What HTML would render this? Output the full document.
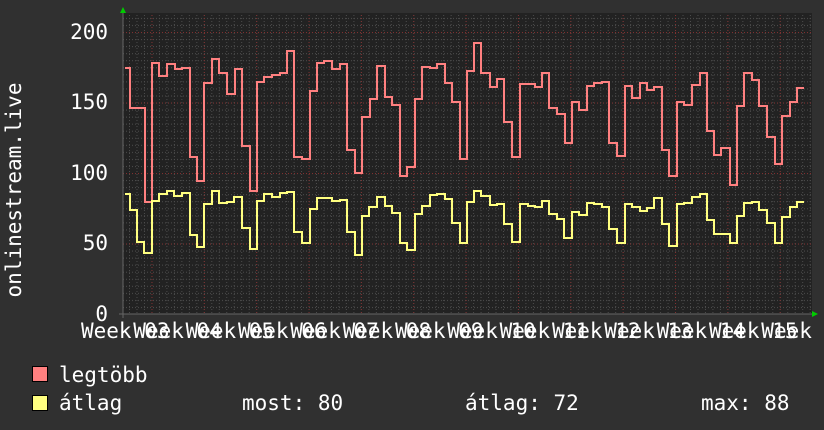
<!DOCTYPE html>
<html><head><meta charset="utf-8"><style>
html,body{margin:0;padding:0;background:#303030;}
svg{display:block}
text{font-family:"DejaVu Sans Mono","Liberation Mono",monospace;fill:#fff;}
</style></head><body>
<svg width="824" height="430" viewBox="0 0 824 430" xmlns="http://www.w3.org/2000/svg">
<defs>
<pattern id="ph" patternUnits="userSpaceOnUse" x="0" y="314" width="6" height="7.05"><path d="M0 0.5H1M3 0.5H4" stroke="#4c4c4c" stroke-width="1"/></pattern>
<pattern id="pv" patternUnits="userSpaceOnUse" x="129" y="0" width="7.48" height="3"><path d="M0.5 0V1" stroke="#4c4c4c" stroke-width="1"/></pattern>
<pattern id="rh" patternUnits="userSpaceOnUse" x="0" y="314" width="3" height="70.5"><path d="M0 0.5H1" stroke="#803030" stroke-width="1"/></pattern>
<pattern id="rv" patternUnits="userSpaceOnUse" x="151.5" y="0" width="52.35" height="3"><path d="M0.5 0V1" stroke="#803030" stroke-width="1"/></pattern>
</defs>
<rect width="824" height="430" fill="#303030"/>
<rect x="123" y="13" width="689" height="301" fill="#222"/>
<rect x="123" y="13" width="689" height="301" fill="url(#ph)"/>
<rect x="123" y="13" width="689" height="301" fill="url(#pv)"/>
<rect x="123" y="13" width="689" height="301" fill="url(#rh)"/>
<rect x="124" y="13" width="688" height="301" fill="url(#rv)"/>
<path d="M123 13V318M119 314H816" stroke="#666" stroke-width="1" fill="none"/>
<polygon points="120,13 126,13 123,7" fill="#0c0"/>
<polygon points="812,311 812,317 818,314" fill="#0c0"/>
<path fill="none" stroke="#ff8080" stroke-width="2" d="M125 68H130V108H145V202H152V63H159V76H167V64H175V69H182V68H190V157H197V181H204V83H212V59H219V73H227V94H235V69H242V146H250V191H257V82H264V77H272V75H280V73H287V51H294V157H302V159H310V91H317V63H324V61H332V69H340V64H347V150H355V173H362V117H370V99H377V66H385V97H392V105H400V176H407V167H415V99H422V67H430V68H437V64H445V83H452V102H460V159H467V71H474V43H481V73H490V87H497V79H504V122H512V157H520V84H535V87H542V73H549V108H557V114H565V143H572V102H579V110H587V86H594V83H602V82H609V143H617V156H625V86H632V98H640V83H647V90H654V87H662V150H669V176H677V102H684V105H692V85H700V73H707V131H714V155H721V148H730V185H737V106H744V73H752V80H759V106H767V137H775V164H782V116H790V102H797V88H804"/>
<path fill="none" stroke="#ffff80" stroke-width="2" d="M125 194H130V210H137V242H144V253H152V201H159V194H167V191H174V196H182V193H190V235H197V247H204V204H212V191H219V203H227V202H234V197H242V228H250V249H257V201H264V194H272V197H280V193H287V192H294V232H302V243H310V209H317V198H324V198H332V201H340V200H347V232H355V255H362V216H369V207H377V197H385V206H392V213H400V243H407V250H415V214H422V206H430V195H437V194H445V199H452V223H460V243H467V202H474V191H481V196H490V205H497V204H504V224H512V242H520V204H528V206H535V207H542V201H549V214H557V219H564V238H572V212H579V215H587V203H594V204H602V207H609V229H617V243H625V204H632V207H640V211H647V208H654V198H662V224H669V246H677V204H684V203H692V197H700V194H707V220H714V234H730V243H737V216H744V203H752V202H759V210H767V223H775V243H782V217H790V207H797V202H804"/>
<g font-size="21" text-anchor="end">
<text x="108" y="39">200</text>
<text x="108" y="109">150</text>
<text x="108" y="180">100</text>
<text x="108" y="250">50</text>
<text x="108" y="321">0</text>
</g>
<text transform="translate(21,190) rotate(-90)" font-size="21" text-anchor="middle">onlinestream.live</text>
<g font-size="21">
<text x="81" y="338">Week 03</text><text x="133.3" y="338">Week 04</text><text x="185.6" y="338">Week 05</text><text x="238" y="338">Week 06</text><text x="290.3" y="338">Week 07</text><text x="342.6" y="338">Week 08</text><text x="395" y="338">Week 09</text><text x="447.3" y="338">Week 10</text><text x="499.6" y="338">Week 11</text><text x="552" y="338">Week 12</text><text x="604.3" y="338">Week 13</text><text x="656.6" y="338">Week 14</text><text x="709" y="338">Week 15</text><text x="761.3" y="338">Week 16</text>
</g>
<rect x="32.5" y="366.5" width="15" height="15" fill="#ff8080" stroke="#000"/>
<rect x="32.5" y="395.5" width="15" height="15" fill="#ffff80" stroke="#000"/>
<g font-size="21">
<text x="59" y="382">legtöbb</text>
<text x="59" y="410">átlag</text>
<text x="242" y="410">most: 80</text>
<text x="465" y="410">átlag: 72</text>
<text x="701" y="410">max: 88</text>
</g>
</svg>
</body></html>
